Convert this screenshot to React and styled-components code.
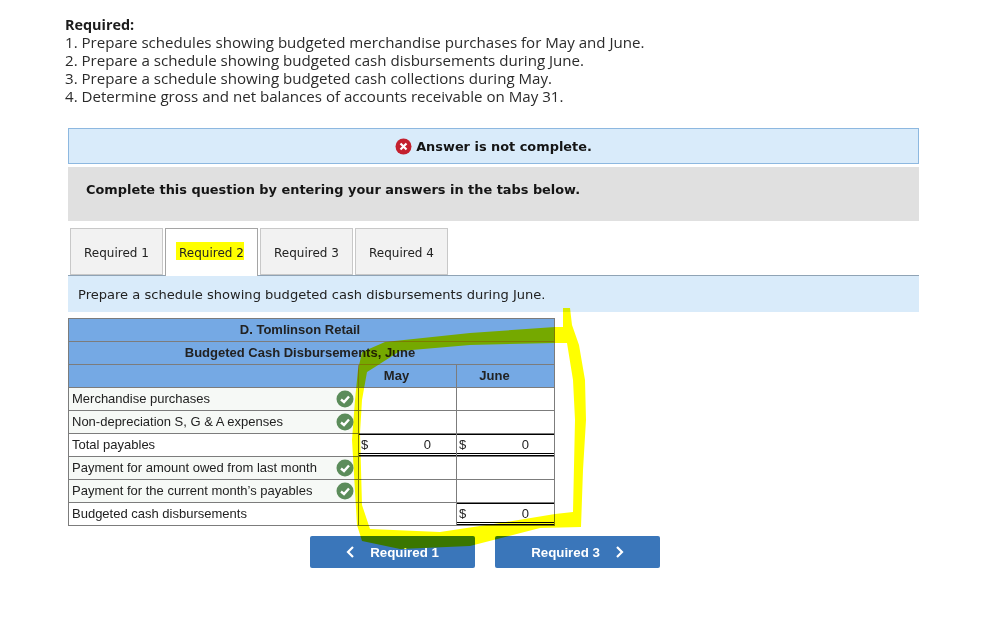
import React from 'react'
import styled, { createGlobalStyle } from 'styled-components'

const GlobalStyle = createGlobalStyle`
    html, body {
        margin: 0;
        padding: 0;
        background: #fff;
    }
`
const Page = styled.div`
    position: relative;
    width: 984px;
    height: 623px;
    overflow: hidden;
    padding: 16px 65px 0 68px;
    box-sizing: border-box;
`
const Intro = styled.div`
    margin-left: -3px;
    font-family: "Open Sans", sans-serif;
    font-size: 15.1px;
    line-height: 18px;
    color: #2b2b2b;
    height: 112px;
`
const IntroTitle = styled.div`
    font-weight: 700;
    font-size: 14.4px;
    height: 17px;
    color: #1c1c1c;
`
const Alert = styled.div`
    height: 36px;
    box-sizing: border-box;
    border: 1px solid #8db8e0;
    background: #d9ebfa;
    display: flex;
    align-items: center;
    justify-content: center;
    gap: 4px;
    font-family: "DejaVu Sans", sans-serif;
    font-size: 12.9px;
    font-weight: 700;
    color: #151515;
`
const Notice = styled.div`
    height: 54px;
    box-sizing: border-box;
    margin-top: 3px;
    background: #e0e0e0;
    display: flex;
    align-items: center;
    padding: 0 0 10px 18px;
    font-family: "DejaVu Sans", sans-serif;
    font-size: 12.9px;
    font-weight: 700;
    color: #151515;
`
const Tabs = styled.div`
    display: flex;
    gap: 2px;
    margin-top: 7px;
    padding-left: 2px;
    height: 48px;
    box-sizing: border-box;
    border-bottom: 1px solid #8fa3b5;
`
const Tab = styled.div`
    width: 93px;
    height: ${p => (p.$active ? '48px' : '47px')};
    box-sizing: border-box;
    border: 1px solid ${p => (p.$active ? '#a5a5a5' : '#c8c8c8')};
    border-bottom: ${p => (p.$active ? 'none' : '1px solid #c8c8c8')};
    background: ${p => (p.$active ? '#fff' : '#f2f2f2')};
    display: flex;
    align-items: center;
    justify-content: center;
    padding-top: 2px;
    font-family: "DejaVu Sans", sans-serif;
    font-size: 12px;
    color: #222;
`
const Marker = styled.span`
    background: #ffff00;
    line-height: 14px;
    padding: 4px 0 0 3px;
    margin: 0 0 6px -3px;
`
const Instruction = styled.div`
    height: 36px;
    background: #d9ebfa;
    display: flex;
    align-items: center;
    padding-left: 10px;
    font-family: "DejaVu Sans", sans-serif;
    font-size: 13.05px;
    color: #222;
`
const Sheet = styled.table`
    margin-top: 6px;
    width: 486px;
    table-layout: fixed;
    border-collapse: collapse;
    font-family: "Liberation Sans", sans-serif;
    font-size: 13px;
    color: #222;
`
const HeadCell = styled.th`
    height: 23px;
    box-sizing: border-box;
    padding: 0 ${p => p.$shift || 0}px 1px 0;
    background: #75a9e4;
    border: 1px solid #7c7c7c;
    font-weight: 700;
    font-size: 13px;
    text-align: center;
    color: #222;
`
const LabelCell = styled.td`
    height: 23px;
    box-sizing: border-box;
    padding: 0 0 2px 3px;
    position: relative;
    border: 1px solid #7c7c7c;
    background: ${p => (p.$shaded ? '#f6f9f6' : '#fff')};
`
const ValueCell = styled.td`
    height: 23px;
    box-sizing: border-box;
    padding: 0;
    border: 1px solid #7c7c7c;
    background: #fff;
`
const TotalBox = styled.div`
    height: 22px;
    box-sizing: border-box;
    display: flex;
    justify-content: space-between;
    align-items: center;
    padding: 0 25px 0 2px;
    border-top: 1px solid #000;
    border-bottom: 3px double #000;
    margin: -1px 0;
`
const CheckMark = styled.svg`
    position: absolute;
    right: 4px;
    top: 2px;
    width: 18px;
    height: 18px;
`
const Pager = styled.div`
    display: flex;
    gap: 20px;
    margin-top: 10px;
    margin-left: 242px;
`
const PagerButton = styled.div`
    width: 165px;
    height: 32px;
    border-radius: 2px;
    background: #3a76ba;
    color: #fff;
    font-family: "Liberation Sans", sans-serif;
    font-size: 13.3px;
    font-weight: 700;
    display: flex;
    align-items: center;
    justify-content: center;
    gap: 15px;
`
const Scribble = styled.svg`
    position: absolute;
    left: 0;
    top: 0;
    width: 984px;
    height: 623px;
    mix-blend-mode: multiply;
    pointer-events: none;
`

const rows = [
    { label: 'Merchandise purchases', check: true },
    { label: 'Non-depreciation S, G & A expenses', check: true },
    { label: 'Total payables', total: [true, true] },
    { label: 'Payment for amount owed from last month', check: true },
    { label: 'Payment for the current month’s payables', check: true },
    { label: 'Budgeted cash disbursements', total: [false, true] },
]

const Check = () => (
    <CheckMark viewBox="0 0 18 18">
        <circle cx="9" cy="9" r="8.5" fill="#5b8c5a" />
        <path d="M5 9.5 L8 12 L13 6.5" fill="none" stroke="#fff" strokeWidth="2.4" />
    </CheckMark>
)

const Value = ({ on }) => (
    <ValueCell>
        {on && <TotalBox><span>$</span><span>0</span></TotalBox>}
    </ValueCell>
)

const App = () => {
    return (
        <Page>
            <GlobalStyle />
            <Intro>
                <IntroTitle>Required:</IntroTitle>
                <div>1. Prepare schedules showing budgeted merchandise purchases for May and June.</div>
                <div>2. Prepare a schedule showing budgeted cash disbursements during June.</div>
                <div>3. Prepare a schedule showing budgeted cash collections during May.</div>
                <div>4. Determine gross and net balances of accounts receivable on May 31.</div>
            </Intro>
            <Alert>
                <svg width="17" height="17" viewBox="0 0 17 17">
                    <circle cx="8.5" cy="8.5" r="8" fill="#c4202e" />
                    <path d="M5.5 5.5 L11.5 11.5 M11.5 5.5 L5.5 11.5" stroke="#fff" strokeWidth="2.2" />
                </svg>
                Answer is not complete.
            </Alert>
            <Notice>Complete this question by entering your answers in the tabs below.</Notice>
            <Tabs>
                <Tab>Required 1</Tab>
                <Tab $active><Marker>Required 2</Marker></Tab>
                <Tab>Required 3</Tab>
                <Tab>Required 4</Tab>
            </Tabs>
            <Instruction>Prepare a schedule showing budgeted cash disbursements during June.</Instruction>
            <Sheet>
                <colgroup>
                    <col style={{ width: 290 }} />
                    <col style={{ width: 98 }} />
                    <col style={{ width: 98 }} />
                </colgroup>
                <thead>
                    <tr><HeadCell colSpan={3} $shift={23}>D. Tomlinson Retail</HeadCell></tr>
                    <tr><HeadCell colSpan={3} $shift={23}>Budgeted Cash Disbursements, June</HeadCell></tr>
                    <tr>
                        <HeadCell />
                        <HeadCell $shift={22}>May</HeadCell>
                        <HeadCell $shift={22}>June</HeadCell>
                    </tr>
                </thead>
                <tbody>
                    {rows.map(row => (
                        <tr key={row.label}>
                            <LabelCell $shaded={row.check}>
                                {row.label}
                                {row.check && <Check />}
                            </LabelCell>
                            <Value on={row.total && row.total[0]} />
                            <Value on={row.total && row.total[1]} />
                        </tr>
                    ))}
                </tbody>
            </Sheet>
            <Pager>
                <PagerButton>
                    <svg width="9" height="12" viewBox="0 0 9 12">
                        <path d="M7 1 L2 6 L7 11" fill="none" stroke="#fff" strokeWidth="2.2" />
                    </svg>
                    Required 1
                </PagerButton>
                <PagerButton>
                    Required 3
                    <svg width="9" height="12" viewBox="0 0 9 12">
                        <path d="M2 1 L7 6 L2 11" fill="none" stroke="#fff" strokeWidth="2.2" />
                    </svg>
                </PagerButton>
            </Pager>
            <Scribble viewBox="0 0 984 623">
                <path
                    fill="#ffff00"
                    fillRule="evenodd"
                    d="M563 308 L570 308 L572 325 L579 345 L585 380 L586 420 L583 470 L581 527 L540 528 L470 546 L400 549 L362 541 L357 525 L352 440 L355 400 L358 370 L362 352 L385 342 L470 333 L555 327 L563 327 Z
                       M367 372 L375 367 L400 351 L470 345 L555 343 L567 343 L573 380 L575 420 L573 512 L555 514 L500 523 L440 532 L370 529 L362 505 L360 433 L362 400 Z"
                />
            </Scribble>
        </Page>
    )
}

export default App
